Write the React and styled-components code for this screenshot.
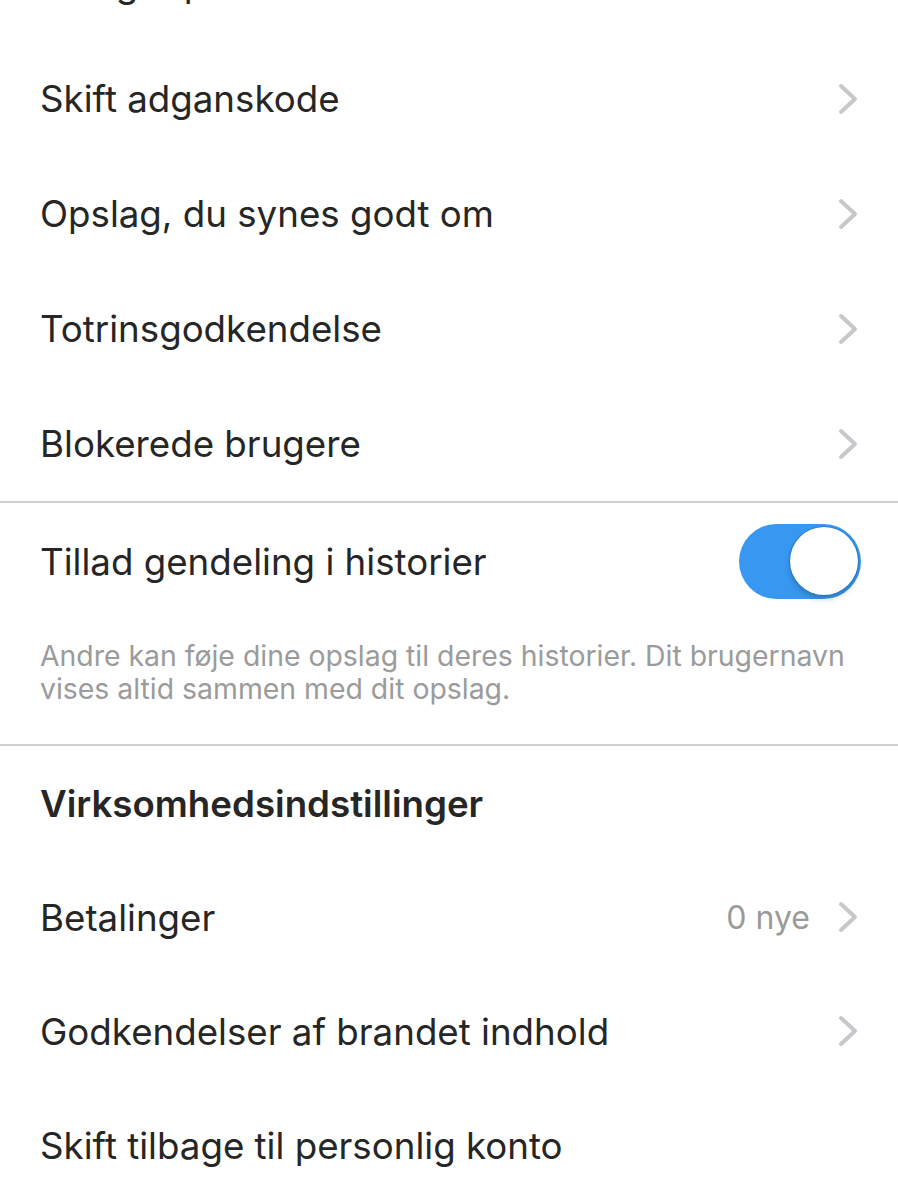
import React from 'react'
import styled, { createGlobalStyle } from 'styled-components'

const GlobalStyle = createGlobalStyle`
  html, body {
    margin: 0;
    padding: 0;
    background: #ffffff;
    overflow: hidden;
  }
  body {
    font-family: Inter, 'Liberation Sans', sans-serif;
    color: #262626;
  }
`

const Page = styled.div`
  width: 898px;
  height: 1200px;
  overflow: hidden;
  background: #ffffff;
`

const List = styled.div`
  display: flex;
  flex-direction: column;
  margin-top: -74px;
`

const Row = styled.div`
  height: ${(props) => props.height || 115}px;
  flex-shrink: 0;
  display: flex;
  align-items: center;
  justify-content: space-between;
  padding: 0 40px;
  box-sizing: border-box;
`

const Label = styled.span`
  font-size: 36.7px;
  font-weight: ${(props) => (props.bold ? 600 : 400)};
  color: #262626;
  white-space: nowrap;
`

const Trailing = styled.div`
  display: flex;
  align-items: center;
  gap: 28px;
`

const Detail = styled.span`
  font-size: 32px;
  color: #9a9a9a;
`

const Divider = styled.div`
  height: 2px;
  flex-shrink: 0;
  background: #cfcfcf;
`

const Note = styled.p`
  margin: 20px 0 39px;
  padding: 0 40px;
  font-size: 28.4px;
  line-height: 33px;
  color: #9b9b9b;
`

const Track = styled.div`
  width: 122px;
  height: 75px;
  border-radius: 38px;
  background: #3897f0;
  display: flex;
  align-items: center;
  justify-content: flex-end;
  padding: 0 3px;
  box-sizing: border-box;
  margin-right: -3px;
`

const Knob = styled.div`
  width: 68px;
  height: 68px;
  border-radius: 50%;
  background: #ffffff;
  box-shadow: 0 0 0 1px rgba(20, 80, 150, 0.35), 0 4px 6px rgba(0, 0, 0, 0.18);
`

const Chevron = () => (
  <svg width="20" height="32" viewBox="0 0 20 32">
    <polyline
      points="3,3 17,16 3,29"
      fill="none"
      stroke="#c7c7cc"
      strokeWidth="4"
      strokeLinecap="round"
      strokeLinejoin="round"
    />
  </svg>
)

const Toggle = () => (
  <Track>
    <Knob />
  </Track>
)

const accountRows = [
  'Rediger profil',
  'Skift adganskode',
  'Opslag, du synes godt om',
  'Totrinsgodkendelse',
  'Blokerede brugere',
]

export default function App() {
  return (
    <Page>
      <GlobalStyle />
      <List>
        {accountRows.map((label) => (
          <Row key={label}>
            <Label>{label}</Label>
            <Chevron />
          </Row>
        ))}
        <Divider />
        <Row height={116}>
          <Label>Tillad gendeling i historier</Label>
          <Toggle />
        </Row>
        <Note>
          Andre kan føje dine opslag til deres historier. Dit brugernavn
          vises altid sammen med dit opslag.
        </Note>
        <Divider />
        <Row height={114}>
          <Label bold>Virksomhedsindstillinger</Label>
        </Row>
        <Row height={114}>
          <Label>Betalinger</Label>
          <Trailing>
            <Detail>0 nye</Detail>
            <Chevron />
          </Trailing>
        </Row>
        <Row height={114}>
          <Label>Godkendelser af brandet indhold</Label>
          <Chevron />
        </Row>
        <Row height={114}>
          <Label>Skift tilbage til personlig konto</Label>
        </Row>
      </List>
    </Page>
  )
}
